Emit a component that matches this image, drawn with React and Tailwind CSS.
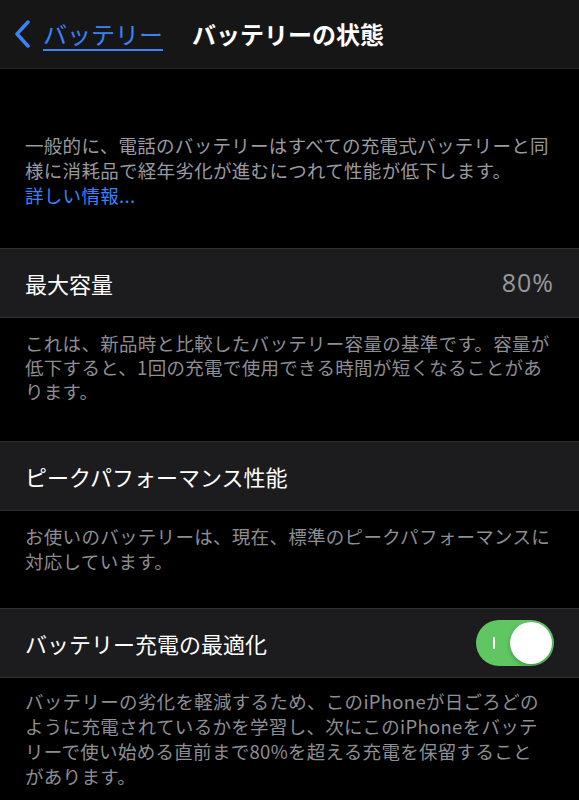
export default function App() {
    const font = { fontFamily: '"Noto Sans CJK JP", "Noto Sans", sans-serif' };

    return (
        <div className="w-[579px] h-[800px] bg-black overflow-hidden" style={font}>
            {/* Nav bar */}
            <div className="h-[69px] bg-[#161616] border-b border-[#262626] flex items-center">
                <svg width="20" height="28" viewBox="0 0 20 28" className="ml-[13px]">
                    <polyline points="15,2 4,14 15,26" fill="none" stroke="#3a82f7" strokeWidth="3.5" strokeLinecap="round" strokeLinejoin="round" />
                </svg>
                <span className="ml-[10px] text-[24px] leading-none text-[#3a82f7] underline underline-offset-[5px] decoration-[2px]">
                    バッテリー
                </span>
                <span className="ml-[29px] text-[24px] leading-none font-bold text-white">
                    バッテリーの状態
                </span>
            </div>

            {/* Intro */}
            <div className="pt-[64px] pb-[40px] px-[25px] text-[18.5px] leading-[25px] text-[#9a9aa0] tracking-[0.3px]">
                <div className="whitespace-nowrap">一般的に、電話のバッテリーはすべての充電式バッテリーと同</div>
                <div className="whitespace-nowrap">様に消耗品で経年劣化が進むにつれて性能が低下します。</div>
                <div className="text-[#3a82f7]">詳しい情報...</div>
            </div>

            {/* Max capacity */}
            <div className="h-[70px] bg-[#1c1c1e] border-y border-[#303032] flex items-center justify-between px-[25px]">
                <span className="text-[22px] text-white">最大容量</span>
                <span className="text-[25px] text-[#98989e] tracking-[1px]" style={{ fontFamily: '"Open Sans", sans-serif' }}>80%</span>
            </div>
            <div className="pt-[13px] pb-[38px] px-[25px] text-[18.5px] leading-[24px] text-[#8e8e93] tracking-[0.3px]">
                <div className="whitespace-nowrap">これは、新品時と比較したバッテリー容量の基準です。容量が</div>
                <div className="whitespace-nowrap">低下すると、1回の充電で使用できる時間が短くなることがあ</div>
                <div>ります。</div>
            </div>

            {/* Peak performance */}
            <div className="h-[70px] bg-[#1c1c1e] border-y border-[#303032] flex items-center px-[25px]">
                <span className="text-[22px] text-white">ピークパフォーマンス性能</span>
            </div>
            <div className="pt-[13px] pb-[34px] px-[25px] text-[18.5px] leading-[25px] text-[#8e8e93] tracking-[0.3px]">
                <div className="whitespace-nowrap">お使いのバッテリーは、現在、標準のピークパフォーマンスに</div>
                <div>対応しています。</div>
            </div>

            {/* Optimized charging */}
            <div className="h-[70px] bg-[#1c1c1e] border-y border-[#303032] flex items-center justify-between pl-[25px] pr-[25px]">
                <span className="text-[22px] text-white">バッテリー充電の最適化</span>
                <div className="relative w-[78px] h-[46px] rounded-full bg-[#5fc662] flex items-center justify-end pr-[2px]">
                    <div className="absolute left-[17px] top-[17px] w-[2px] h-[12px] bg-white rounded-full" />
                    <div className="w-[42px] h-[42px] rounded-full bg-white shadow-[0_2px_4px_rgba(0,0,0,0.25)]" />
                </div>
            </div>
            <div className="pt-[11px] px-[25px] text-[18.5px] leading-[25px] text-[#8e8e93] tracking-[0.3px]">
                <div className="whitespace-nowrap">バッテリーの劣化を軽減するため、このiPhoneが日ごろどの</div>
                <div className="whitespace-nowrap">ように充電されているかを学習し、次にこのiPhoneをバッテ</div>
                <div className="whitespace-nowrap">リーで使い始める直前まで80%を超える充電を保留すること</div>
                <div>があります。</div>
            </div>
        </div>
    );
}
